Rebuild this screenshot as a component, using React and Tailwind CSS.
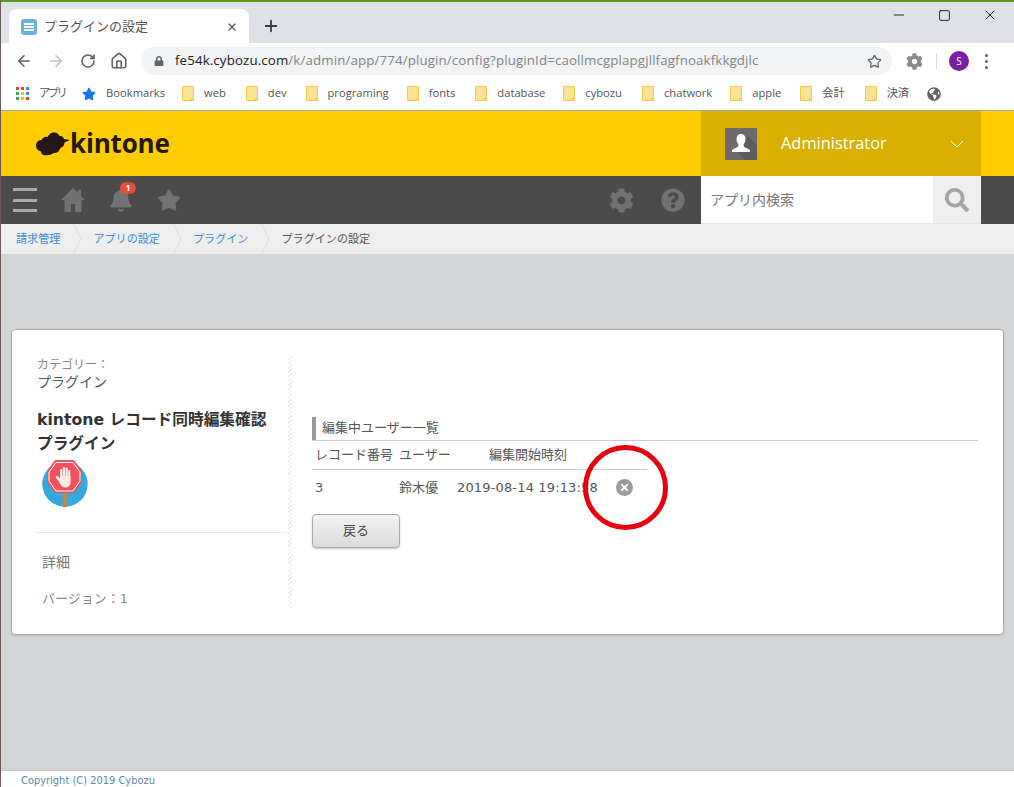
import React from 'react';
import { ArrowLeft, ArrowRight, RotateCw, Home, Star, Plus, X, Minus, Square } from 'lucide-react';
import { FaBell, FaStar, FaCog, FaQuestionCircle, FaSearch, FaLock, FaGlobeAmericas, FaTimes } from 'react-icons/fa';

const bookmarks = [
  { label: 'web', ml: 'ml-[17px]' },
  { label: 'dev', ml: 'ml-[20px]' },
  { label: 'programing', ml: 'ml-[19px]' },
  { label: 'fonts', ml: 'ml-[18px]' },
  { label: 'database', ml: 'ml-[20px]' },
  { label: 'cybozu', ml: 'ml-[18px]' },
  { label: 'chatwork', ml: 'ml-[20px]' },
  { label: 'apple', ml: 'ml-[18px]' },
  { label: '会計', ml: 'ml-[19px]' },
  { label: '決済', ml: 'ml-[20px]' },
];

const crumbs = ['請求管理', 'アプリの設定', 'プラグイン'];

const Folder = () => (
  <svg width="12" height="15" viewBox="0 0 12 15" className="shrink-0">
    <path d="M.5.5h11v14H.5z" fill="#fde293" stroke="#f2c94c" />
    <path d="M9 12.5h2.500v2H9z" fill="#fde293" stroke="#f2c94c" />
  </svg>
);

const AppsGrid = () => (
  <svg width="13" height="13" viewBox="0 0 13 13" className="shrink-0">
    <path d="M0 0h3v3H0z" fill="#ea4335" />
    <path d="M5 0h3v3H5z" fill="#ea4335" />
    <path d="M10 0h3v3h-3z" fill="#4285f4" />
    <path d="M0 5h3v3H0z" fill="#34a853" />
    <path d="M5 5h3v3H5z" fill="#fbbc05" />
    <path d="M10 5h3v3h-3z" fill="#4285f4" />
    <path d="M0 10h3v3H0z" fill="#34a853" />
    <path d="M5 10h3v3H5z" fill="#fbbc05" />
    <path d="M10 10h3v3h-3z" fill="#ea4335" />
  </svg>
);

const Cloud = () => (
  <svg width="34" height="24" viewBox="0 0 34 24" className="shrink-0">
    <path
      d="M8 23c-2 0-3-2-3-3.500C2 19 0 16.500 0 13.500 0 10 3 8 5.500 8 7 5 9.500 4.500 11.500 5 13 2 15.500 0 19 .5c2.500.5 4 2 4.500 3.500 2-.5 4 .5 4.500 3L34 8l-5.500 2.500c0 3-2 5-4 5.500-1 3.500-4 5.500-7 5-2 2-6 2.500-9.500 2z"
      fill="#231815"
    />
  </svg>
);

const StopSign = () => (
  <svg width="46" height="46" viewBox="0 0 46 46" className="overflow-visible">
    <circle cx="23" cy="23" r="22.700" fill="#33a9e0" />
    <path d="M20.500 32H25v14h-4.500z" fill="#b58a58" />
    <path d="M13 -1L32 -1 40 10 40 21 32 32 13 32 5 21 5 10z" fill="#f4515f" />
    <path d="M14 1.500L31 1.500 38 11 38 20 31 30 14 30 7 20 7 11z" fill="none" stroke="#fff" strokeWidth="1" />
    <g stroke="#f7efe6" strokeLinecap="round" fill="none">
      <path d="M19.200 17V9M21.900 17V7M24.600 17V7.500M27.200 18V10" strokeWidth="2.200" />
      <path d="M15 16l4.500 6" strokeWidth="2.600" />
    </g>
    <path d="M18 15h10.500v6c0 3-2 5.500-5 5.500s-4-1.500-5.500-4z" fill="#f7efe6" />
  </svg>
);

const Avatar = () => (
  <div className="relative flex h-8 w-8 items-end justify-center overflow-hidden bg-[#6b6b6b]">
    <svg width="32" height="32" viewBox="0 0 32 32">
      <path d="M12 24l8 8h12V18l-9-10z" fill="#5c5c5c" />
      <path
        d="M16 6c-3 0-4.500 2-4.500 5 0 2 .8 4 1.800 5 .2 1.500 0 2.300-.8 3-1.500 1-4.500 1.500-5.500 3.500v1.500h18v-1.500c-1-2-4-2.500-5.500-3.500-.8-.7-1-1.500-.8-3 1-1 1.800-3 1.800-5 0-3-1.500-5-4.500-5z"
        fill="#fff"
      />
    </svg>
  </div>
);

const HomeIcon = () => (
  <svg width="24" height="24" viewBox="0 0 24 24" className="ml-6 shrink-0">
    <path d="M12 0L0 12h3.500v12H10v-8h4v8h6.500V12H24l-4-4V2h-3v3z" fill="#727272" />
  </svg>
);

const CrumbSeparator = () => (
  <svg width="9" height="30" viewBox="0 0 9 30" className="ml-[13px] mr-[11px] shrink-0">
    <path d="M.5 0L8 15 .5 30" fill="none" stroke="#dcdcdc" />
  </svg>
);

const BrowserChrome = () => (
  <div className="shrink-0 font-['Open_Sans','Noto_Sans_CJK_JP',sans-serif]">
    {/* tab strip */}
    <div className="flex h-[43px] items-end border-t-2 border-[#5b9a1b] bg-[#dee1e6] pl-2">
      <div className="flex h-[34px] w-[240px] items-center rounded-t-lg bg-white pl-3 pr-[11px] pt-[2px]">
        <div className="flex h-4 w-4 flex-col justify-center gap-px rounded-[3px] bg-[#6bb1e0] px-[3px]">
          <div className="h-[2px] bg-white" />
          <div className="h-[2px] bg-white" />
          <div className="h-[2px] bg-white" />
        </div>
        <span className="ml-[7px] flex-1 text-[13px] text-[#555]">プラグインの設定</span>
        <X size={12} strokeWidth={3} className="text-[#5f6368]" />
      </div>
      <div className="ml-[13px] flex h-[34px] items-center">
        <Plus size={18} strokeWidth={2.5} className="text-[#3c4043]" />
      </div>
      <div className="ml-auto mr-4 flex h-[26px] items-center gap-[31px] self-start text-black">
        <Minus size={16} strokeWidth={1.2} />
        <Square size={13} strokeWidth={1.5} />
        <X size={16} strokeWidth={1.2} />
      </div>
    </div>
    {/* address bar */}
    <div className="flex h-[34px] items-center bg-white pl-[14px] pr-[15px] pt-[2px]">
      <ArrowLeft size={18} strokeWidth={2.2} className="text-[#5f6368]" />
      <ArrowRight size={18} strokeWidth={2.2} className="ml-[14px] text-[#bdc1c6]" />
      <RotateCw size={16} strokeWidth={2.4} className="ml-[15px] text-[#5f6368]" />
      <Home size={18} strokeWidth={2.2} className="ml-[14px] text-[#5f6368]" />
      <div className="ml-[13px] flex h-7 w-[751px] items-center rounded-full bg-[#f1f3f4] pl-[13px] pr-[10px]">
        <FaLock size={10} className="text-[#5f6368]" />
        <span className="ml-[11px] flex-1 text-[13.3px] tracking-[0.125px] text-[#80868b]">
          <span className="text-[#202124]">fe54k.cybozu.com</span>/k/admin/app/774/plugin/config?pluginId=caollmcgplapgjllfagfnoakfkkgdjlc
        </span>
        <Star size={15} strokeWidth={2} className="text-[#5f6368]" />
      </div>
      <FaCog size={17} className="ml-[14px] text-[#8a8a8a]" />
      <div className="ml-[13px] h-[16px] w-px bg-[#dadce0]" />
      <div className="ml-3 flex h-5 w-5 items-center justify-center rounded-full bg-[#7b1fa2] text-[10px] text-white">S</div>
      <div className="ml-[16px] flex flex-col gap-[3px]">
        <div className="h-[3px] w-[3px] rounded-full bg-[#5f6368]" />
        <div className="h-[3px] w-[3px] rounded-full bg-[#5f6368]" />
        <div className="h-[3px] w-[3px] rounded-full bg-[#5f6368]" />
      </div>
    </div>
    {/* bookmarks */}
    <div className="flex h-[33px] items-center bg-white pl-[15px] text-[11.2px] text-[#555]">
      <AppsGrid />
      <span className="ml-[10px] tracking-[-2.5px]">アプリ</span>
      <FaStar size={14} className="ml-[17px] text-[#1a73e8]" />
      <span className="ml-[10px]">Bookmarks</span>
      {bookmarks.map((b) => (
        <div key={b.label} className={`flex items-center gap-[10px] ${b.ml}`}>
          <Folder />
          <span>{b.label}</span>
        </div>
      ))}
      <FaGlobeAmericas size={14} className="ml-[18px] text-[#5f6368]" />
    </div>
  </div>
);

const KintoneHeader = () => (
  <div className="shrink-0 font-['Open_Sans','Noto_Sans_CJK_JP',sans-serif]">
    <div className="flex h-[66px] items-center border-t border-[#aaa] bg-[#ffcc00] pl-[35px] pr-[33px]">
      <Cloud />
      <span className="text-[26px] font-bold tracking-[-0.2px] text-[#231815]">kintone</span>
      <div className="ml-auto flex h-full w-[280px] items-center bg-[#d9b000] pl-6 pr-[17px]">
        <Avatar />
        <span className="-mt-[1px] ml-6 flex-1 text-[16.4px] text-white">Administrator</span>
        <svg width="14" height="8" viewBox="0 0 14 8">
          <path d="M1 1l6 6 6-6" fill="none" stroke="#fff" strokeWidth="1" />
        </svg>
      </div>
    </div>
    <div className="flex h-[48px] items-center bg-[#4b4b4b] pl-3 pr-[33px]">
      <div className="flex w-6 flex-col gap-[7.5px]">
        <div className="h-[3px] bg-[#a8a8a8]" />
        <div className="h-[3px] bg-[#a8a8a8]" />
        <div className="h-[3px] bg-[#a8a8a8]" />
      </div>
      <HomeIcon />
      <div className="relative ml-[24px]">
        <FaBell size={24} className="text-[#727272]" />
        <span className="absolute -top-[6px] left-[11px] flex h-[12px] w-[16px] items-center justify-center rounded-full bg-[#e74c3c] text-[9px] font-bold text-white">1</span>
      </div>
      <FaStar size={24} className="ml-[24px] text-[#727272]" />
      <FaCog size={25} className="ml-auto text-[#727272]" />
      <FaQuestionCircle size={24} className="ml-[27px] text-[#727272]" />
      <div className="ml-4 flex h-full w-[280px]">
        <div className="flex flex-1 items-center border-b border-[#e5e5e5] bg-white pl-[9px] text-sm text-[#777]">アプリ内検索</div>
        <div className="flex w-12 items-center justify-center border-b border-[#e5e5e5] bg-[#eee]">
          <FaSearch size={24} className="text-[#a5a5a5]" />
        </div>
      </div>
    </div>
    <div className="flex h-[30px] items-center bg-[#eee] pl-[15px] text-[11.1px]">
      {crumbs.map((c) => (
        <React.Fragment key={c}>
          <span className="text-[#3b8ad9]">{c}</span>
          <CrumbSeparator />
        </React.Fragment>
      ))}
      <span className="text-[#555]">プラグインの設定</span>
    </div>
  </div>
);

const EditorsTable = () => (
  <table className="w-[335px] table-fixed border-collapse text-[13px] text-[#555]">
    <thead>
      <tr className="h-[28px] border-b border-[#ccc]">
        <th className="w-[87px] pl-[3px] text-left font-normal">レコード番号</th>
        <th className="w-[58px] text-left font-normal">ユーザー</th>
        <th className="w-[159px] text-left font-normal"><span className="ml-[32px]">編集開始時刻</span></th>
        <th />
      </tr>
    </thead>
    <tbody>
      <tr className="h-[36px]">
        <td className="pl-[3px]">3</td>
        <td>鈴木優</td>
        <td className="whitespace-nowrap tracking-[0.15px]">2019-08-14 19:13:58</td>
        <td>
          <div className="flex h-[17px] w-[17px] items-center justify-center rounded-full bg-[#9b9b9b]">
            <FaTimes size={11} className="text-white" />
          </div>
        </td>
      </tr>
    </tbody>
  </table>
);

const PluginCard = () => (
  <div className="relative mx-[10px] mt-[75px] flex h-[306px] rounded-[4px] border border-[#aaa] bg-white pl-[25px] pr-[25px] pt-[25px] shadow-sm">
    <div className="flex h-[254px] w-[251px] shrink-0 flex-col">
      <div className="w-[250px] pt-px">
        <p className="text-xs leading-[18px] text-[#888]">カテゴリー：</p>
        <p className="text-sm leading-[16px] text-[#555]">プラグイン</p>
        <h1 className="mt-[18px] text-[15.7px] font-bold leading-6 text-[#333]">kintone レコード同時編集確認<br />プラグイン</h1>
        <div className="ml-[5px] mt-[5px]">
          <StopSign />
        </div>
      </div>
      <div className="mt-[25px] w-[250px] border-t border-[#e8e8e8] pl-[5px]">
        <p className="mt-[19px] text-sm leading-5 text-[#777]">詳細</p>
        <p className="mt-[18px] text-[13px] leading-[18px] text-[#888]">バージョン：1</p>
      </div>
    </div>
    {/* hatched column divider */}
    <div className="h-[254px] w-[4px] shrink-0 bg-[repeating-linear-gradient(135deg,#e8e8e8_0,#e8e8e8_1px,transparent_1px,transparent_3px)]" />
    <div className="ml-[20px] flex-1 pt-[62px]">
      <div className="flex h-6 items-center border-b border-[#ccc]">
        <div className="h-full border-l-4 border-[#999] pl-[6px] text-[13px] leading-[22px] text-[#555]">編集中ユーザー一覧</div>
      </div>
      <EditorsTable />
      <button className="mt-[9px] h-[34px] w-[88px] rounded-[4px] border border-[#aaa] bg-gradient-to-b from-[#f4f4f4] to-[#dcdcdc] text-[13px] text-[#444] shadow-[0_1px_2px_rgba(0,0,0,0.25)]">戻る</button>
    </div>
    {/* red annotation circle drawn over the screenshot */}
    <div className="absolute left-[571px] top-[115px] h-[85px] w-[85px] rounded-full border-[5px] border-[#e60012]" />
  </div>
);

export default function App() {
  return (
    <div className="flex h-[787px] flex-col overflow-hidden border-l border-[#6b5b57] font-['DejaVu_Sans','Noto_Sans_CJK_JP',sans-serif]">
      <BrowserChrome />
      <KintoneHeader />
      <main className="flex-1 bg-[#d4d5d7]">
        <PluginCard />
      </main>
      <footer className="h-[16px] shrink-0 bg-white pl-5 text-[9.9px] leading-[19px] text-[#5a86ab] shadow-[0_-1px_2px_rgba(0,0,0,0.08)]">Copyright (C) 2019 Cybozu</footer>
    </div>
  );
}
